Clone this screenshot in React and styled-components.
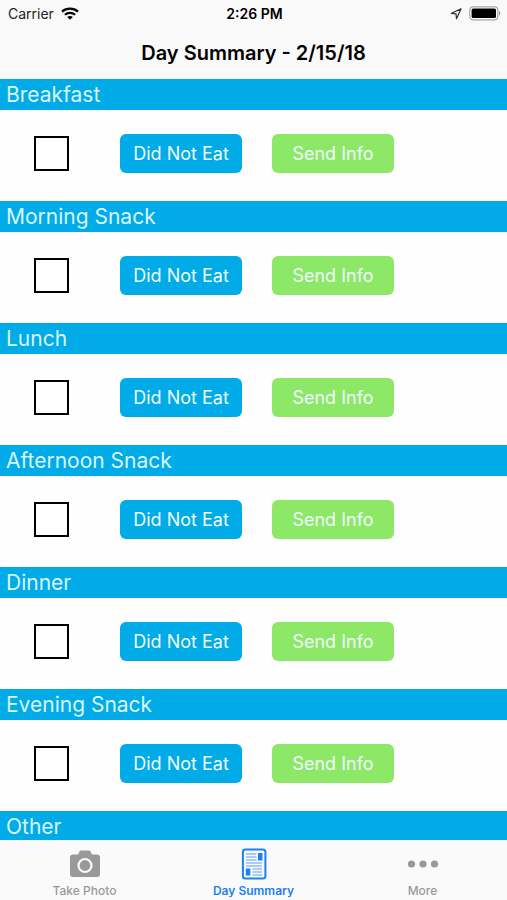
import React, { useState } from 'react';
import styled, { createGlobalStyle } from 'styled-components';

const meals = [
  { name: 'Breakfast', trackable: true },
  { name: 'Morning Snack', trackable: true },
  { name: 'Lunch', trackable: true },
  { name: 'Afternoon Snack', trackable: true },
  { name: 'Dinner', trackable: true },
  { name: 'Evening Snack', trackable: true },
  { name: 'Other', trackable: false },
];

function StatusBar() {
  return (
    <Status>
      <Carrier>
        <span>Carrier</span>
        <svg width="18" height="13" viewBox="0 0 18 13" fill="none" stroke="#000" strokeWidth="2.2">
          <path d="M1 4.6C5.4.6 12.6.6 17 4.6" />
          <path d="M3.9 7.8c2.8-2.6 7.4-2.6 10.2 0" />
          <path d="M6.2 10c1.5-1.4 4.1-1.4 5.6 0L9 12.8z" fill="#000" stroke="none" />
        </svg>
      </Carrier>
      <Time>2:26 PM</Time>
      <Indicators>
        <svg width="12" height="12" viewBox="0 0 12 12" fill="none" stroke="#333" strokeWidth="1.2">
          <path d="M11 .9 1.4 5.3l4.6.6.5 4.8z" strokeLinejoin="round" />
        </svg>
        <svg width="32" height="15" viewBox="0 0 32 15">
          <rect x=".8" y=".8" width="28" height="13" rx="3.2" fill="#fff" stroke="#a5a5a5" strokeWidth="1.2" />
          <rect x="2.6" y="2.6" width="24.4" height="9.4" rx="1.5" fill="#000" />
          <path d="M30 5v4.500c1.700-.600 1.700-3.900 0-4.500z" fill="#999" />
        </svg>
      </Indicators>
    </Status>
  );
}

function MealSection({ meal }) {
  const [eaten, setEaten] = useState(false);

  return (
    <section>
      <MealTitle>{meal.name}</MealTitle>
      {meal.trackable && (
        <MealRow>
          <CheckBox
            type="checkbox"
            aria-label={meal.name}
            checked={eaten}
            onChange={(e) => setEaten(e.target.checked)}
          />
          <MealButton type="button" $color="#00abe7" onClick={() => setEaten(false)}>
            Did Not Eat
          </MealButton>
          <MealButton type="button" $color="#8ee868">Send Info</MealButton>
        </MealRow>
      )}
    </section>
  );
}

function CameraIcon() {
  return (
    <svg width="32" height="28" viewBox="0 0 32 28">
      <path
        d="M4 4.5h5l1.3-2.6C10.7 1 11.3.5 12.2.5h7.6c.9 0 1.5.5 1.9 1.4L23 4.5h5c1.900 0 3 1.100 3 3V24c0 1.900-1.100 3-3 3H4c-1.900 0-3-1.100-3-3V7.500c0-1.900 1.100-3 3-3z"
        fill="#999"
      />
      <circle cx="16" cy="15.5" r="6.5" fill="#999" stroke="#fafafa" strokeWidth="2.2" />
    </svg>
  );
}

function SummaryIcon() {
  return (
    <svg width="26" height="32" viewBox="0 0 26 32" fill="none" stroke="#1b80f5">
      <rect x="1.9" y="1.5" width="22.5" height="29" rx="2.5" strokeWidth="2" />
      <path
        d="M5 6h10.500M5 9h10.500M5 12h10.500M5 15h16M5 18h16M11.500 21h9.500M11.500 24h9.500M11.500 27h9.500"
        strokeWidth="1"
        opacity=".75"
      />
      <path d="M17 5h4.500v7.500H17zM4.800 20.500h4.500V27.500H4.800z" fill="#1b80f5" stroke="none" />
    </svg>
  );
}

function MoreIcon() {
  return (
    <svg width="32" height="8" viewBox="0 0 32 8" fill="#999">
      <circle cx="4.5" cy="4" r="3.6" />
      <circle cx="16" cy="4" r="3.6" />
      <circle cx="27.5" cy="4" r="3.6" />
    </svg>
  );
}

export default function App() {
  return (
    <>
      <GlobalStyle />
      <Screen>
        <Header>
          <StatusBar />
          <Title>Day Summary - 2/15/18</Title>
        </Header>
        <MealList>
          {meals.map((meal) => (
            <MealSection key={meal.name} meal={meal} />
          ))}
        </MealList>
        <TabBar>
          <Tab href="#photo">
            <TabIcon><CameraIcon /></TabIcon>
            Take Photo
          </Tab>
          <Tab href="#summary" $active aria-current="page">
            <TabIcon><SummaryIcon /></TabIcon>
            Day Summary
          </Tab>
          <Tab href="#more">
            <TabIcon><MoreIcon /></TabIcon>
            More
          </Tab>
        </TabBar>
      </Screen>
    </>
  );
}

const GlobalStyle = createGlobalStyle`
  * {
    box-sizing: border-box;
  }

  body {
    margin: 0;
    background: #fefefe;
    font-family: Inter, "Liberation Sans", sans-serif;
  }
`;

const Screen = styled.div`
  display: flex;
  flex-direction: column;
  height: 100vh;
`;

const Header = styled.header`
  flex: none;
  background: #f9f9f9;
`;

const Status = styled.div`
  display: grid;
  grid-template-columns: 1fr auto 1fr;
  align-items: center;
  height: 27px;
  padding: 0 6px 0 8px;
  font-size: 14px;
  line-height: 16px;
  color: #222;
`;

const Carrier = styled.div`
  display: flex;
  align-items: center;
  gap: 7px;
`;

const Time = styled.span`
  font-weight: 600;
  color: #000;
`;

const Indicators = styled.div`
  display: flex;
  align-items: center;
  justify-content: flex-end;
  gap: 7px;
`;

const Title = styled.h1`
  margin: 0;
  padding: 13px 0;
  font-size: 20px;
  line-height: 26px;
  font-weight: 600;
  text-align: center;
  color: #000;
`;

const MealList = styled.main`
  flex: 1;
  min-height: 0;
  overflow-y: auto;
  scrollbar-width: none;
`;

const MealTitle = styled.h2`
  margin: 0;
  padding: 0 6px;
  background: #00abe7;
  color: #d9f6ff;
  font-size: 21px;
  font-weight: 400;
  line-height: 31px;
`;

const MealRow = styled.div`
  display: flex;
  align-items: center;
  padding: 24px 34px 28px;
`;

const CheckBox = styled.input`
  appearance: none;
  width: 35px;
  height: 35px;
  margin: 0 51px 0 0;
  border: 2px solid #000;
  background: #fff;

  &:checked {
    background: #00abe7;
    box-shadow: inset 0 0 0 4px #fff;
  }
`;

const MealButton = styled.button`
  width: 122px;
  height: 39px;
  margin-right: 30px;
  padding: 0;
  border: none;
  border-radius: 6px;
  background: ${({ $color }) => $color};
  color: #effcff;
  font-family: inherit;
  font-size: 18px;
  line-height: 24px;
  cursor: pointer;
`;

const TabBar = styled.nav`
  flex: none;
  display: grid;
  grid-template-columns: repeat(3, 1fr);
  height: 60px;
  background: #fafafa;
`;

const Tab = styled.a`
  display: flex;
  flex-direction: column;
  align-items: center;
  gap: 3px;
  padding-top: 7px;
  font-size: 12px;
  line-height: 16px;
  font-weight: ${({ $active }) => ($active ? 600 : 500)};
  text-decoration: none;
  color: ${({ $active }) => ($active ? '#1b80f5' : '#999')};
`;

const TabIcon = styled.span`
  display: flex;
  align-items: center;
  height: 33px;
`;
